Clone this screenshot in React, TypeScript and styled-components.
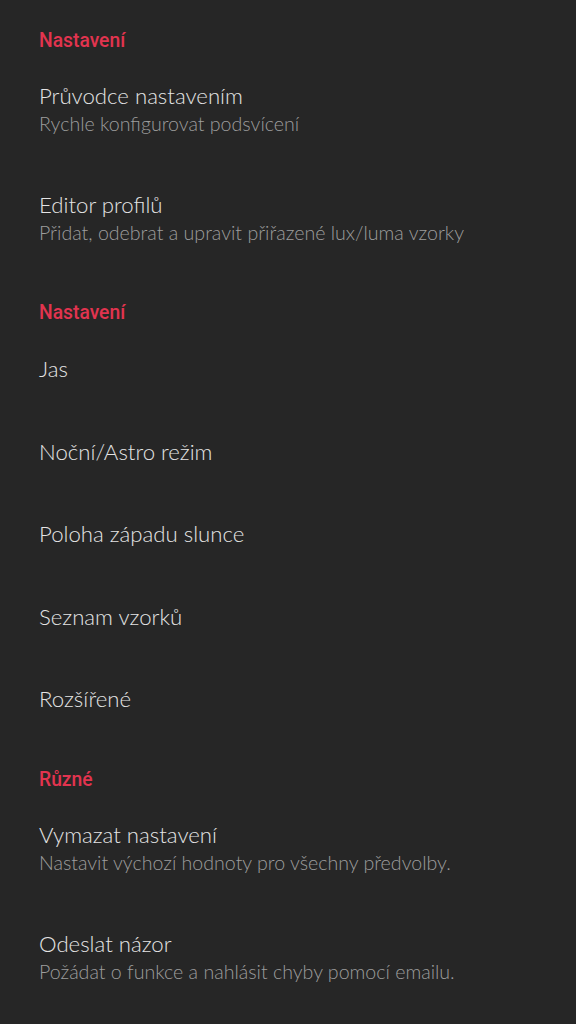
import React from "react";
import styled, { createGlobalStyle } from "styled-components";

const Global = createGlobalStyle`
  html, body { margin: 0; padding: 0; background: #262626; }
  body { font-family: Lato, "Noto Sans", sans-serif; }
`;

const Page = styled.div`
  min-height: 1024px;
  background: #262626;
  padding-top: 2px;
  box-sizing: border-box;
`;

const Category = styled.div`
  padding: 27px 39px 3px;
  font-family: Roboto, sans-serif;
  font-weight: 500;
  font-size: 19.3px;
  line-height: 24px;
  color: #e2344f;
`;

const Item = styled.div<{ $twoLine?: boolean }>`
  box-sizing: border-box;
  padding: 0 39px;
  display: flex;
  flex-direction: column;
  justify-content: ${(p) => (p.$twoLine ? "flex-start" : "center")};
  height: ${(p) => (p.$twoLine ? "109px" : "82.5px")};
  padding-top: ${(p) => (p.$twoLine ? "27px" : "0")};
`;

const Title = styled.div`
  font-family: Lato, sans-serif;
  font-weight: 300;
  font-size: 22.2px;
  line-height: 26px;
  color: #e4e4e4;
`;

const Summary = styled.div`
  margin-top: 3px;
  font-family: Lato, sans-serif;
  font-weight: 300;
  font-size: 19.6px;
  line-height: 24px;
  color: #9d9d9d;
`;

type Entry = { title: string; summary?: string };

const groups: { header: string; items: Entry[] }[] = [
  {
    header: "Nastavení",
    items: [
      { title: "Průvodce nastavením", summary: "Rychle konfigurovat podsvícení" },
      { title: "Editor profilů", summary: "Přidat, odebrat a upravit přiřazené lux/luma vzorky" },
    ],
  },
  {
    header: "Nastavení",
    items: [
      { title: "Jas" },
      { title: "Noční/Astro režim" },
      { title: "Poloha západu slunce" },
      { title: "Seznam vzorků" },
      { title: "Rozšířené" },
    ],
  },
  {
    header: "Různé",
    items: [
      { title: "Vymazat nastavení", summary: "Nastavit výchozí hodnoty pro všechny předvolby." },
      { title: "Odeslat názor", summary: "Požádat o funkce a nahlásit chyby pomocí emailu." },
    ],
  },
];

export default function App() {
  return (
    <Page>
      <Global />
      {groups.map((g, gi) => (
        <React.Fragment key={gi}>
          <Category>{g.header}</Category>
          {g.items.map((it) => (
            <Item key={it.title} $twoLine={!!it.summary}>
              <Title>{it.title}</Title>
              {it.summary && <Summary>{it.summary}</Summary>}
            </Item>
          ))}
        </React.Fragment>
      ))}
    </Page>
  );
}
